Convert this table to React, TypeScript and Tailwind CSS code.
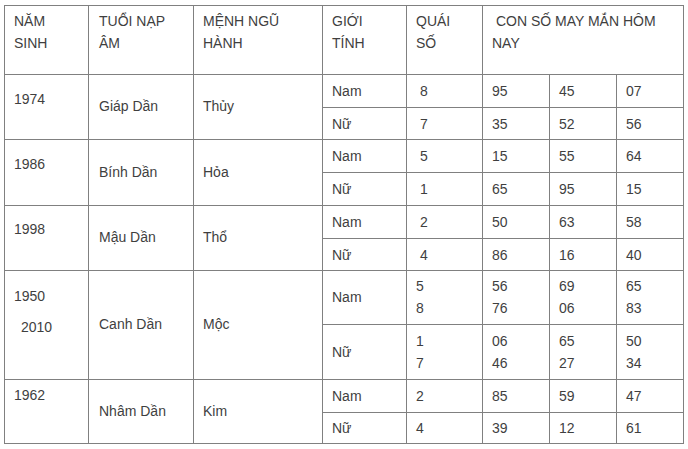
import React from 'react';

type Group = {
  year: React.ReactNode;
  yearPad: string;
  name: string;
  element: string;
  nam: { q: React.ReactNode; n: React.ReactNode[] };
  nu: { q: React.ReactNode; n: React.ReactNode[] };
};

const two = (a: string, b: string) => (
  <span>
    {a}
    <br />
    {b}
  </span>
);

const groups: Group[] = [
  {
    year: '1974',
    yearPad: 'pt-[13px]',
    name: 'Giáp Dần',
    element: 'Thủy',
    nam: { q: '\u00a08', n: ['95', '45', '07'] },
    nu: { q: '\u00a07', n: ['35', '52', '56'] },
  },
  {
    year: '1986',
    yearPad: 'pt-[13px]',
    name: 'Bính Dần',
    element: 'Hỏa',
    nam: { q: '\u00a05', n: ['15', '55', '64'] },
    nu: { q: '\u00a01', n: ['65', '95', '15'] },
  },
  {
    year: '1998',
    yearPad: 'pt-[12px]',
    name: 'Mậu Dần',
    element: 'Thổ',
    nam: { q: '\u00a02', n: ['50', '63', '58'] },
    nu: { q: '\u00a04', n: ['86', '16', '40'] },
  },
  {
    year: (
      <div>
        <div>1950</div>
        <div className="mt-[9px] pl-[7px]">2010</div>
      </div>
    ),
    yearPad: 'pt-[14px]',
    name: 'Canh Dần',
    element: 'Mộc',
    nam: { q: two('5', '8'), n: [two('56', '76'), two('69', '06'), two('65', '83')] },
    nu: { q: two('1', '7'), n: [two('06', '46'), two('65', '27'), two('50', '34')] },
  },
  {
    year: '1962',
    yearPad: 'pt-[4px]',
    name: 'Nhâm Dần',
    element: 'Kim',
    nam: { q: '2', n: ['85', '59', '47'] },
    nu: { q: '4', n: ['39', '12', '61'] },
  },
];

function Cell({ className = '', children }: { className?: string; children?: React.ReactNode }) {
  return (
    <div className={`flex border-r border-b border-[#808080] pl-[9px] whitespace-nowrap ${className}`}>
      {children}
    </div>
  );
}

export default function App() {
  return (
    <div className="min-h-screen bg-white pl-[4px] pt-[5px] font-['Liberation_Sans',Arial,sans-serif] text-[14px] leading-[22px] text-[#3f3f3f]">
      <div className="grid w-fit grid-cols-[84px_105px_129px_84px_76px_67px_67px_67px] grid-rows-[69px_33px_32px_33px_33px_33px_32px_54px_55px_33px_31px] border-l border-t border-[#808080]">
        {/* header */}
        <Cell className="items-start pt-[4px]">
          NĂM
          <br />
          SINH
        </Cell>
        <Cell className="items-start pt-[4px] pl-[10px]">
          TUỔI NẠP
          <br />
          ÂM
        </Cell>
        <Cell className="items-start pt-[4px]">
          MỆNH NGŨ
          <br />
          HÀNH
        </Cell>
        <Cell className="items-start pt-[4px]">
          GIỚI
          <br />
          TÍNH
        </Cell>
        <Cell className="items-start pt-[4px]">
          QUÁI
          <br />
          SỐ
        </Cell>
        <Cell className="col-span-3 items-start pt-[4px]">
          {'\u00a0'}CON SỐ MAY MẮN HÔM
          <br />
          NAY
        </Cell>

        {groups.map((g) => (
          <React.Fragment key={g.name}>
            <Cell className={`row-span-2 items-start ${g.yearPad}`}>{g.year}</Cell>
            <Cell className="row-span-2 items-center pb-[2px] pl-[10px]">{g.name}</Cell>
            <Cell className="row-span-2 items-center pb-[2px]">{g.element}</Cell>

            <Cell className="items-center pb-[1px]">Nam</Cell>
            <Cell className="items-center pb-[1px]">{g.nam.q}</Cell>
            {g.nam.n.map((v, i) => (
              <Cell key={'a' + i} className="items-center pb-[1px]">
                {v}
              </Cell>
            ))}

            <Cell className="items-center">Nữ</Cell>
            <Cell className="items-center">{g.nu.q}</Cell>
            {g.nu.n.map((v, i) => (
              <Cell key={'b' + i} className="items-center">
                {v}
              </Cell>
            ))}
          </React.Fragment>
        ))}
      </div>
    </div>
  );
}
